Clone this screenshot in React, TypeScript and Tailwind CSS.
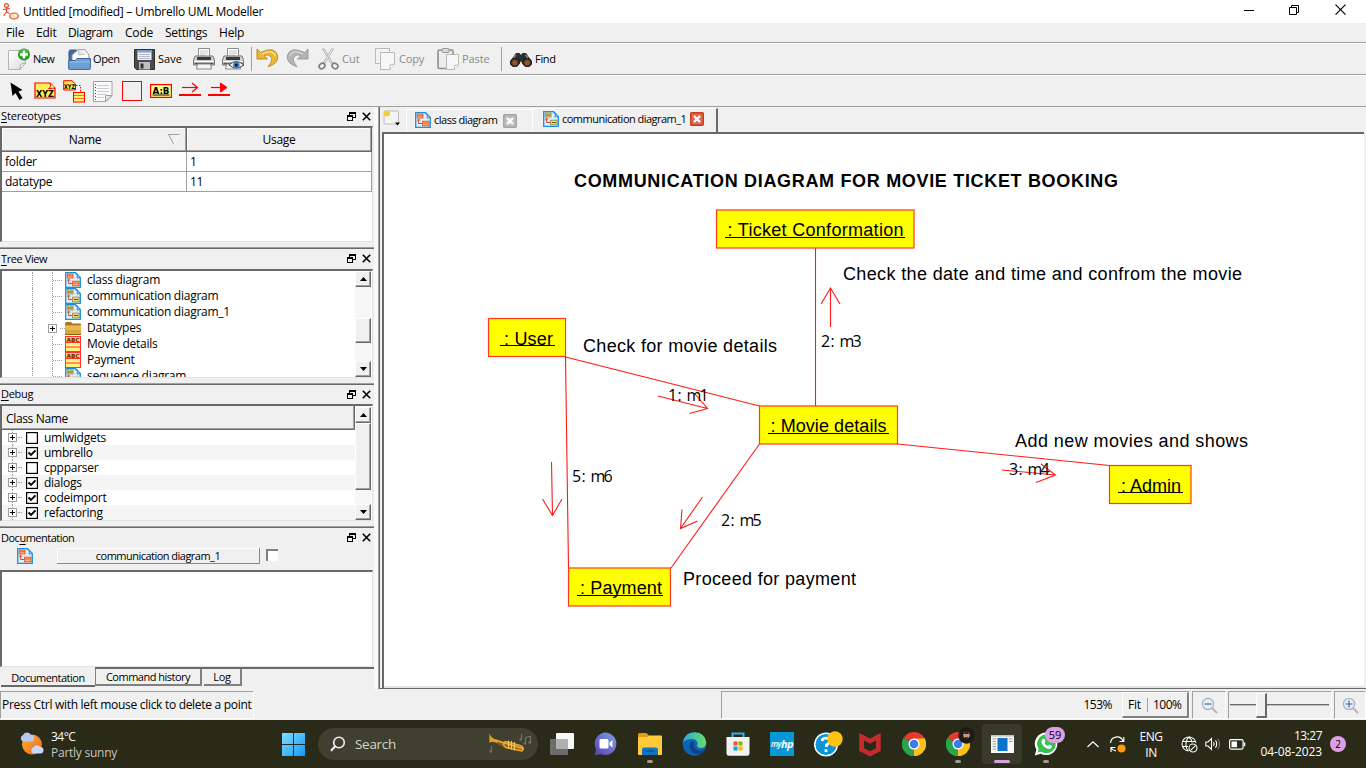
import type { ReactNode } from "react";

const UI = "font-['Open_Sans','Noto_Sans',sans-serif]";

/* ---------- toolbar icons ---------- */

function AppIcon() {
  return (
    <svg width="17" height="17" viewBox="0 0 17 17" fill="none" stroke="#e8442c" strokeWidth="1.2">
      <circle cx="4.500" cy="2.500" r="1.900" />
      <path d="M4.500 4.500V9M1 6.500L8 5.500M4.500 9L1.500 13M4.500 9L7.500 10.500" />
      <ellipse cx="12" cy="13" rx="4.300" ry="3" fill="#ffe9c0" />
    </svg>
  );
}

function NewIcon() {
  return (
    <svg width="23" height="22" viewBox="0 0 23 22">
      <defs>
        <linearGradient id="pg" x1="0" y1="0" x2="1" y2="1">
          <stop offset="0" stopColor="#ffffff" />
          <stop offset="1" stopColor="#dcdcdc" />
        </linearGradient>
      </defs>
      <path d="M.5 2.500H17.500V15L12 21.500H.5Z" fill="url(#pg)" stroke="#b4b4b4" />
      <path d="M12 21.500L12.500 16.500L17.500 15Z" fill="#fff" stroke="#a0a0a0" strokeWidth=".8" />
      <circle cx="16" cy="6.500" r="6" fill="#1f9a1c" />
      <circle cx="16" cy="5.500" r="4.600" fill="#46b83c" />
      <path d="M16 2.500V10.500M12 6.500H20" stroke="#fff" strokeWidth="2.400" />
    </svg>
  );
}

function OpenIcon() {
  return (
    <svg width="23" height="21" viewBox="0 0 23 21">
      <path d="M1 11V2.500Q1 1 2.500 1H8.500L10.500 3V11Z" fill="#3d6ea5" stroke="#2c5689" />
      <path d="M4 12V6L10 .7H17L21 6V12Z" fill="#fafafa" stroke="#8c8c8c" strokeWidth=".9" />
      <path d="M10 .7L11 6L17 5" fill="#e4e4e4" stroke="#aaa" strokeWidth=".7" />
      <path d="M.6 19.500V11.500H7L9 9.500H22.400V19.500Q22.400 20.400 21.500 20.400H1.500Q.6 20.400 .6 19.500Z" fill="#6f9fd4" stroke="#3867a0" />
      <path d="M1.500 13H22" stroke="#9cc0e6" />
    </svg>
  );
}

function SaveIcon() {
  return (
    <svg width="21" height="21" viewBox="0 0 21 21">
      <path d="M.5 .5H20.500V20.500H2.500L.5 18.500Z" fill="#4b4b4f" stroke="#2d2d30" />
      <rect x="3.500" y="1" width="14" height="10" fill="#eef3fa" />
      <rect x="3.500" y="1" width="14" height="2.500" fill="#7aa2d8" />
      <path d="M5 5.500H16M5 7.500H16M5 9.500H16" stroke="#b5bcc8" />
      <rect x="5" y="13" width="11" height="7.500" fill="#bfc0c4" />
      <rect x="6.500" y="14.500" width="3" height="5" fill="#333" />
    </svg>
  );
}

function PrintIcon({ eye = false }: { eye?: boolean }) {
  return (
    <svg width="22" height="22" viewBox="0 0 22 22">
      <path d="M5.500 .5H16.500V9H5.500Z" fill="#fff" stroke="#8b8b8b" />
      <path d="M7 3H15M7 5H15M7 7H13" stroke="#c5c5c5" />
      <path d="M2 8H20L21.500 12V17H.5V12Z" fill="#cfcfcf" stroke="#777" />
      <path d="M4 9H18V12H4Z" fill="#3a3a3a" />
      <path d="M1 13.500H21" stroke="#fff" />
      <path d="M1.500 15.500H20.500" stroke="#555" strokeWidth="1.500" />
      <path d="M4.500 16H17.500L18.500 21H3.500Z" fill="#f4f4f4" stroke="#888" />
      {eye && (
        <g>
          <path d="M7 17Q14 10 22 17Q14 23 7 17Z" fill="#e9f1fa" stroke="#444" />
          <circle cx="14.300" cy="17" r="3.300" fill="#3f7fc4" />
          <circle cx="14.300" cy="17" r="1.500" fill="#101a30" />
        </g>
      )}
    </svg>
  );
}

function UndoIcon({ gray = false }: { gray?: boolean }) {
  return (
    <svg width="23" height="20" viewBox="0 0 23 20" className={gray ? "-scale-x-100" : ""}>
      <path
        d="M1 1V11H11.500L8 7.800Q12 5.500 14.800 8.500Q17.500 12 12 18.800Q22.500 15.500 21.800 8Q19 -2.500 4.500 4.500Z"
        fill={gray ? "#b4b4b4" : "#e9b83a"}
        stroke={gray ? "#979797" : "#bb8415"}
        strokeWidth=".9"
      />
      <path d="M6 6Q16 .5 19.500 8" fill="none" stroke={gray ? "#d0d0d0" : "#f8df79"} strokeWidth="1.500" />
    </svg>
  );
}

function CutIcon() {
  return (
    <svg width="21" height="22" viewBox="0 0 21 22" fill="none">
      <path d="M4.500 .8L13 15.500L14.500 14.500L6.500 1Z" fill="#ececec" stroke="#a6a6a6" strokeWidth=".8" />
      <path d="M15.500 .8L7 15.500L5.500 14.500L13.500 1Z" fill="#f4f4f4" stroke="#a6a6a6" strokeWidth=".8" />
      <ellipse cx="4" cy="18" rx="3.100" ry="2.500" transform="rotate(-35 4 18)" stroke="#7d7d7d" strokeWidth="1.600" />
      <ellipse cx="17" cy="18" rx="3.100" ry="2.500" transform="rotate(35 17 18)" stroke="#7d7d7d" strokeWidth="1.600" />
    </svg>
  );
}

function CopyIcon() {
  return (
    <svg width="21" height="22" viewBox="0 0 21 22" stroke="#b9b9b9">
      <path d="M.5 .5H14.500V15.500H.5Z" fill="#f3f3f3" />
      <path d="M5.500 4.500H19.500V16L15 21.500H5.500Z" fill="#f7f7f7" />
      <path d="M15 21.500V17L19.500 16" fill="#fff" />
    </svg>
  );
}

function PasteIcon() {
  return (
    <svg width="22" height="22" viewBox="0 0 22 22">
      <rect x="1" y="2" width="15" height="18.500" rx="1.500" fill="#ededed" stroke="#8f8f8f" strokeWidth="1.600" />
      <rect x="5" y=".5" width="7" height="4" rx="1" fill="#d8d8d8" stroke="#999" />
      <path d="M9.500 6.500H21.500V17L17.500 21.500H9.500Z" fill="#f7f7f7" stroke="#b9b9b9" />
      <path d="M17.500 21.500V17.500L21.500 17" fill="#fff" stroke="#b9b9b9" />
    </svg>
  );
}

function FindIcon() {
  return (
    <svg width="22" height="15" viewBox="0 0 22 15">
      <path d="M6 1H9.500L11 3L12.500 1H16L21.500 9V13L17 14.500L12.500 12L11 9L9.500 12L5 14.500L.5 13V9Z" fill="#2e2e2e" />
      <circle cx="4.800" cy="10.500" r="4.300" fill="#3b3b3b" stroke="#111" />
      <circle cx="17.200" cy="10.500" r="4.300" fill="#3b3b3b" stroke="#111" />
      <circle cx="4.800" cy="10.700" r="2.500" fill="#a5501c" />
      <circle cx="17.200" cy="10.700" r="2.500" fill="#a5501c" />
      <path d="M6 3L4 6M15.500 3L18 6" stroke="#8f8f8f" strokeWidth="1.200" />
    </svg>
  );
}

/* ---------- work toolbar ---------- */

const CursorIcon = () => (
  <svg width="14" height="19" viewBox="0 0 14 19">
    <path d="M.5 .5L12.500 8L8.500 9.500L12.500 16L9.500 18L5.500 11L2.500 14Z" fill="#000" />
  </svg>
);

const XyzIcon = () => (
  <svg width="22" height="17" viewBox="0 0 22 17">
    <path d="M1 1H16L21 6V16H1Z" fill="#ffee55" stroke="#f00" strokeWidth="1.200" />
    <path d="M16 1Q18 5 14.500 6.500L21 6" fill="#ffffb0" stroke="#f00" />
    <text x="2" y="14.500" fontSize="9.500" fontWeight="bold" fontFamily="DejaVu Sans" textLength="18" lengthAdjust="spacingAndGlyphs">XYZ</text>
  </svg>
);

const XyzLinkIcon = () => (
  <svg width="23" height="23" viewBox="0 0 23 23">
    <path d="M.7 .7H9L12.500 4V10H.7Z" fill="#ffe94a" stroke="#f00" />
    <text x="1" y="8.800" fontSize="6.500" fontWeight="bold" fontFamily="DejaVu Sans" textLength="11" lengthAdjust="spacingAndGlyphs">XYZ</text>
    <path d="M13 5.500H17.500V12" fill="none" stroke="#f00" strokeDasharray="1.500 1.500" />
    <rect x="10.500" y="12.500" width="11" height="9.500" fill="#fff176" stroke="#f00" />
    <path d="M11 15.500H21M11 18.500H21" stroke="#f77700" />
  </svg>
);

const NoteIcon = () => (
  <svg width="20" height="21" viewBox="0 0 20 21">
    <path d="M.5 .5H19V14.500L13 20.500H.5Z" fill="#fafafa" stroke="#a0a0a0" />
    <path d="M4 4.500H16M4 7.500H16M4 10.500H16M4 13.500H13M4 16.500H11" stroke="#c3ccd4" />
    <path d="M2.500 3V19" stroke="#444" strokeDasharray="1 2" />
    <path d="M12.500 20.500V14.500H19Z" fill="#e9e9e9" stroke="#a0a0a0" />
  </svg>
);

const AbIcon = () => (
  <svg width="22" height="14" viewBox="0 0 22 14">
    <rect x=".6" y=".6" width="20.800" height="12.800" fill="#ffff8a" stroke="#f00" strokeWidth="1.200" />
    <text x="2.500" y="9.500" fontSize="8.500" fontWeight="bold" fontFamily="DejaVu Sans" textLength="17" lengthAdjust="spacingAndGlyphs">A:B</text>
    <path d="M2.500 11H19.500" stroke="#000" />
  </svg>
);

const MsgIcon = ({ solid = false }: { solid?: boolean }) => (
  <svg width="22" height="14" viewBox="0 0 22 14" stroke="#f00" fill="none">
    <path d="M0 13H22" strokeWidth="2" />
    <path d="M3 5.500H18" strokeWidth="1.200" />
    {solid ? <path d="M12.500 1L19 5.500L12.500 10Z" fill="#f00" /> : <path d="M13 1L18.500 5.500L13 10" strokeWidth="1.200" />}
  </svg>
);

/* ---------- small tree / dock icons ---------- */

function DiagramIcon({ kind = "comm" }: { kind?: "class" | "comm" }) {
  const box = kind === "class" ? "#ffb27a" : "#f0e27c";
  const line = kind === "class" ? "#e8532b" : "#9a8a3e";
  return (
    <svg width="16" height="16" viewBox="0 0 16 16" className="shrink-0">
      <path d="M.7 .7H10.500L15.300 5.500V15.300H.7Z" fill="#d9effc" stroke="#1b8fe0" strokeWidth="1.300" />
      <path d="M10 .7Q13.500 1.500 12 6L15.300 5.500Z" fill="#fff" stroke="#1b8fe0" />
      <rect x="2.200" y="2" width="5.800" height="4" fill={box} stroke={line} strokeWidth=".9" />
      <rect x="7.600" y="9.200" width="6.400" height="4.600" fill={box} stroke={line} strokeWidth=".9" />
      <path d={kind === "class" ? "M8 11H14M2.500 3.700H8" : "M3 4H7.500M8.800 11.500H13"} stroke={kind === "class" ? "#e8532b" : "#4b4320"} strokeWidth=".9" />
      <path d="M3.600 7V11.500H7.200M2.300 8.700L3.600 7L5 8.700" fill="none" stroke="#e8442c" />
    </svg>
  );
}

const FolderIcon = () => (
  <svg width="16" height="14" viewBox="0 0 16 14" className="shrink-0">
    <path d="M0 2.500Q0 1 1.500 1H6L7.500 2.500H15Q16 2.500 16 3.500V13H0Z" fill="#a9761b" />
    <path d="M0 4.500H16V13H0Z" fill="#dca53a" />
    <path d="M0 4.500H16V8.500Q8 9.500 0 8.500Z" fill="#e8b855" />
    <path d="M0 13.500H16" stroke="#8d6010" />
  </svg>
);

const ClassIcon = () => (
  <svg width="16" height="16" viewBox="0 0 16 16" className="shrink-0">
    <rect x=".5" y=".5" width="15" height="15" fill="#fff27d" stroke="#f33" />
    <rect x="1" y="1" width="14" height="4.500" fill="#ffc766" />
    <text x="1.500" y="5.600" fontSize="5.500" fontWeight="bold" fontFamily="DejaVu Sans" fill="#6b2200" textLength="13" lengthAdjust="spacingAndGlyphs">ABC</text>
    <path d="M0 6.500H16M0 11H16" stroke="#f33" strokeWidth="1.200" />
  </svg>
);

const Plus = () => (
  <svg width="9" height="9" viewBox="0 0 9 9" className="shrink-0" shapeRendering="crispEdges">
    <rect x=".5" y=".5" width="8" height="8" fill="#fff" stroke="#a0a0a0" />
    <path d="M2 4.500H7M4.500 2V7" stroke="#000" />
  </svg>
);

const DockButtons = () => (
  <span className="flex gap-[6px]">
    <svg width="9" height="9" viewBox="0 0 9 9" fill="none" stroke="#000" shapeRendering="crispEdges">
      <path d="M2.500 3V.5H8.500V5.500H6M2 1.500H9M.5 3.500H5.500V8.500H.5ZM0 4.500H6" />
    </svg>
    <svg width="9" height="9" viewBox="0 0 9 9" stroke="#000" strokeWidth="1.600">
      <path d="M.8 .8L8.200 8.200M8.200 .8L.8 8.200" />
    </svg>
  </span>
);

/* ---------- panels ---------- */

function DockTitle({ first, rest, lead = "", className }: { first: string; rest: string; lead?: string; className: string }) {
  return (
    <div className={`flex items-center justify-between pr-[3px] pb-px pl-px text-[11px] leading-[18px] ${className}`}>
      <span>
        {lead}
        <u className="underline-offset-2">{first}</u>
        {rest}
      </span>
      <DockButtons />
    </div>
  );
}

const ScrollButton = ({ down = false }: { down?: boolean }) => (
  <div className="flex h-4 w-4 shrink-0 items-center justify-center border border-t-white border-l-white border-r-[#696969] border-b-[#696969] bg-[#f0f0f0] shadow-[inset_-1px_-1px_0_#a0a0a0]">
    <svg width="7" height="4" viewBox="0 0 7 4" className={down ? "rotate-180" : ""}>
      <path d="M0 4L3.500 0L7 4Z" />
    </svg>
  </div>
);

const Thumb = ({ className }: { className: string }) => (
  <div className={`w-4 shrink-0 border border-t-white border-l-white border-r-[#696969] border-b-[#696969] bg-[#f0f0f0] shadow-[inset_-1px_-1px_0_#a0a0a0] ${className}`} />
);

const Divider = () => <div className="h-0.5 w-[374px] border-t border-[#a0a0a0] bg-[#696969]" />;

const inset = "border-t-2 border-l-2 border-r border-b border-t-[#696969] border-l-[#696969] border-r-[#e3e3e3] border-b-[#e3e3e3] bg-white";

const headCell = "flex h-6 items-center border-r border-b border-[#696969] bg-[#f0f0f0] pt-px tracking-[-0.25px] shadow-[inset_-1px_-1px_0_#a0a0a0,inset_1px_1px_0_#fff]";

function Stereotypes() {
  return (
    <section>
      <DockTitle first="S" rest="tereotypes" className="h-[19px] tracking-[-0.1px]" />
      <div className={`${inset} mb-[5px] h-[116px] w-[373px]`}>
        <div className="grid w-[370px] grid-cols-[185px_185px] text-[12px]">
          <div className={`relative justify-center pr-[18px] ${headCell}`}>
            Name
            <svg width="12" height="11" viewBox="0 0 12 11" className="absolute top-[6px] right-[6px]" fill="none">
              <path d="M0 .5H12M.5 .5L6 10.500" stroke="#a0a0a0" />
              <path d="M11.500 .5L6 10.500" stroke="#fff" />
            </svg>
          </div>
          <div className={`justify-center ${headCell}`}>Usage</div>
          {["folder", "1", "datatype", "11"].map((t, i) => (
            <div key={i} className="flex h-5 items-center border-r border-b border-[#a0a0a0] pl-[3px] tracking-[-0.25px]">
              {t}
            </div>
          ))}
        </div>
      </div>
      <Divider />
    </section>
  );
}

const TREE: { label: string; icon: ReactNode; plus?: boolean }[] = [
  { label: "class diagram", icon: <DiagramIcon kind="class" /> },
  { label: "communication diagram", icon: <DiagramIcon /> },
  { label: "communication diagram_1", icon: <DiagramIcon /> },
  { label: "Datatypes", icon: <FolderIcon />, plus: true },
  { label: "Movie details", icon: <ClassIcon /> },
  { label: "Payment", icon: <ClassIcon /> },
  { label: "sequence diagram", icon: <DiagramIcon /> },
];

function TreeView() {
  return (
    <section>
      <DockTitle first="T" rest="ree View" className="h-5 tracking-[-0.4px]" />
      <div className={`${inset} mb-[5px] flex h-[109px] w-[373px] overflow-hidden`}>
        <div className="w-[353px] overflow-hidden pt-px">
          {TREE.map((n) => (
            <div key={n.label} className="flex h-4 items-center">
              <div className="ml-[30px] h-4 w-[16px] border-l border-dotted border-[#a0a0a0]" />
              {n.plus ? (
                <div className="flex w-[17px] items-center">
                  <Plus />
                  <span className="ml-[3px] w-[5px] border-t border-dotted border-[#a0a0a0]" />
                </div>
              ) : (
                <div className="ml-[4px] flex h-4 w-[13px] items-center border-l border-dotted border-[#a0a0a0]">
                  <span className="w-[9px] border-t border-dotted border-[#a0a0a0]" />
                </div>
              )}
              {n.icon}
              <span className="ml-[6px] text-[12px] leading-4 tracking-[-0.25px] whitespace-nowrap">{n.label}</span>
            </div>
          ))}
        </div>
        <div className="flex w-4 flex-col bg-[#f7f7f7]">
          <ScrollButton />
          <Thumb className="mt-[31px] h-[25px]" />
          <div className="flex-1" />
          <ScrollButton down />
        </div>
      </div>
      <Divider />
    </section>
  );
}

const DEBUG: [string, boolean][] = [
  ["umlwidgets", false],
  ["umbrello", true],
  ["cppparser", false],
  ["dialogs", true],
  ["codeimport", true],
  ["refactoring", true],
];

function Debug() {
  return (
    <section>
      <DockTitle first="D" rest="ebug" className="h-[19px] tracking-[-0.3px]" />
      <div className={`${inset} mb-[5px] flex h-[117px] w-[373px]`}>
        <div className="w-[353px]">
          <div className="flex h-[24px] items-center border-r border-b border-[#696969] bg-[#f0f0f0] pt-0.5 pl-1 text-[12px] tracking-[-0.35px] shadow-[inset_-1px_-1px_0_#a0a0a0]">Class Name</div>
          <div>
            {DEBUG.map(([name, on]) => (
              <div key={name} className="flex h-[15px] items-center pl-[6px] odd:bg-white even:bg-[#f5f5f5]">
                <div className="flex h-[15px] flex-col items-center">
                  <span className="h-[3px] border-l border-dotted border-[#a0a0a0]" />
                  <Plus />
                  <span className="h-[3px] border-l border-dotted border-[#a0a0a0]" />
                </div>
                <span className="ml-px w-1 border-t border-dotted border-[#a0a0a0]" />
                <svg width="12" height="12" viewBox="0 0 12 12" className="ml-[4px]">
                  <rect x=".6" y=".6" width="10.800" height="10.800" fill="#fff" stroke="#000" strokeWidth="1.200" />
                  {on && <path d="M2.500 5.500L5 8L9.500 3.300" fill="none" stroke="#000" strokeWidth="1.900" />}
                </svg>
                <span className="ml-[6px] text-[12px] leading-[15px] tracking-[-0.25px]">{name}</span>
              </div>
            ))}
          </div>
        </div>
        <div className="flex w-4 flex-col bg-[#f7f7f7] pt-px">
          <ScrollButton />
          <Thumb className="h-[67px]" />
          <div className="flex-1" />
          <ScrollButton down />
        </div>
      </div>
      <Divider />
    </section>
  );
}

function Documentation() {
  return (
    <section className="flex flex-col">
      <DockTitle lead="Doc" first="u" rest="mentation" className="h-5 tracking-[-0.5px]" />
      <div className="flex h-[22px] items-start pl-[17px]">
        <DiagramIcon kind="class" />
        <div className="ml-6 h-4 w-[203px] border-r border-b border-[#8a8a8a] text-center text-[11px] leading-[15px] tracking-[-0.52px] shadow-[inset_1px_1px_0_#fff]">communication diagram_1</div>
        <div className="mt-px ml-[6px] h-3 w-3 border-t-2 border-l-2 border-t-[#808080] border-l-[#808080] bg-white" />
      </div>
      <div className={`${inset} h-[97px] w-[373px]`} />
      <div className="flex h-[21px] items-start text-[11px]">
        <div className="ml-px h-5 w-[94px] border-b-2 border-[#696969] text-center leading-[22px] tracking-[-0.5px]">Documentation</div>
        <div className="flex h-[19px] flex-1 border-t-2 border-[#696969]">
          <div className="h-[17px] w-[107px] border-r-2 border-b-2 border-l border-[#808080] text-center leading-4 tracking-[-0.5px]">Command history</div>
          <div className="ml-0.5 h-[17px] w-[38px] border-r-2 border-b-2 border-[#808080] text-center leading-4 tracking-[-0.3px]">Log</div>
        </div>
      </div>
    </section>
  );
}

/* ---------- diagram ---------- */

const NODES = [
  { x: 716.5, y: 210, w: 197.5, h: 38, label: ": Ticket Conformation", u0: 725, tx: 728.5, tw: 176, u1: 905 },
  { x: 488.5, y: 318.5, w: 77, h: 38, label: ": User", u0: 500, tx: 505, tw: 49, u1: 555 },
  { x: 759.5, y: 406, w: 138, h: 38, label: ": Movie details", u0: 768, tx: 771.5, tw: 116, u1: 889 },
  { x: 1109.5, y: 465.5, w: 81.5, h: 38, label: ": Admin", u0: 1118, tx: 1122, tw: 60, u1: 1183 },
  { x: 568.5, y: 568, w: 102, h: 38, label: ": Payment", u0: 577, tx: 581, tw: 82, u1: 663 },
];

const NOTES = [
  { x: 843, y: 280, w: 399, t: "Check the date and time and confrom the movie" },
  { x: 583, y: 352, w: 194, t: "Check for movie details" },
  { x: 1015, y: 447, w: 233, t: "Add new movies and shows" },
  { x: 683, y: 585, w: 173, t: "Proceed for payment" },
];

const MESSAGES = [
  { x: 821, y: 347, t: "2: m3" },
  { x: 668, y: 401, t: "1: m1" },
  { x: 572, y: 482, t: "5: m6" },
  { x: 721, y: 526, t: "2: m5" },
  { x: 1009, y: 475, t: "3: m4" },
];

/* horizontal start of each glyph in a message label */
const GLYPH_STEPS = [0, 9.5, 14, 18.5, 31.5];

function Diagram() {
  return (
    <svg width="980" height="552" viewBox="384 134 980 552" className="block bg-white">
      <g stroke="#ff1a1a" strokeWidth="1.100" fill="none">
        <path d="M815.500 248V406M565.500 357L759.500 406M565.500 357L568.500 568M759.500 444L671 568M897.500 444L1109.500 465.500" />
        <path d="M830.500 327V288M821 304L830.500 288L840 304" />
        <path d="M658 396L707.500 408.500M695 394L707.500 408.500L689.500 413.500" />
        <path d="M551.500 462L552.500 515.500M542.500 499L552.500 515.500L562 499" />
        <path d="M702.500 497L680.500 528.500M682 509.500L680.500 528.500L697.500 521" />
        <path d="M1002 470L1055.500 475M1041 464L1055.500 475L1036 482.500" />
      </g>
      <g fontFamily="'Liberation Sans', Arial, sans-serif" fontSize="18">
        <text x="574" y="187" fontWeight="bold" textLength="544">COMMUNICATION DIAGRAM FOR MOVIE TICKET BOOKING</text>
        {NODES.map((n) => (
          <g key={n.label}>
            <rect x={n.x} y={n.y} width={n.w} height={n.h} fill="#ffff00" stroke="#ff3a1a" strokeWidth="1.200" />
            <text x={n.tx - 1} y={n.y + 26} textLength={n.tw}>{n.label}</text>
            <path d={`M${n.u0} ${Math.floor(n.y) + 27.5}H${n.u1}`} stroke="#000" strokeWidth="1.200" />
          </g>
        ))}
        {NOTES.map((n) => (
          <text key={n.t} x={n.x} y={n.y} textLength={n.w}>{n.t}</text>
        ))}
      </g>
      <g fontFamily="'Open Sans', 'Noto Sans', sans-serif" fontSize="16">
        {MESSAGES.map((m) => (
          <text key={m.t} x={GLYPH_STEPS.map((s) => m.x + s).join(" ")} y={m.y}>{m.t}</text>
        ))}
      </g>
    </svg>
  );
}

const TabClose = ({ active = false }: { active?: boolean }) => (
  <svg width="14" height="14" viewBox="0 0 14 14">
    <rect x=".7" y=".7" width="12.600" height="12.600" rx="1" fill={active ? "#e2694c" : "#bdbdbd"} stroke={active ? "#c93a1c" : "#a3a3a3"} strokeWidth="1.400" />
    <path d="M4 4L10 10M10 4L4 10" stroke="#fff" strokeWidth="2.300" />
  </svg>
);

function Workspace() {
  return (
    <main className="flex w-[986px] flex-col">
      <div className="flex h-[25px] items-end">
        <svg width="18" height="16" viewBox="0 0 18 16" className="mb-[6px] ml-[3px]">
          <rect x="1" y="1" width="14.500" height="13" rx="1.500" fill="#f4f4f4" stroke="#bcbcbc" />
          <circle cx="4" cy="3.500" r="3" fill="#f7cf2e" />
          <path d="M12 12.500H17L14.500 15.500Z" />
        </svg>
        <div className="ml-[5px] flex h-[23px] w-[126px] items-center border-t border-l border-white pb-[3px] pl-[8px] text-[11px]">
          <DiagramIcon kind="class" />
          <span className="ml-[3px] w-[65px] pt-px tracking-[-0.5px] whitespace-nowrap">class diagram</span>
          <span className="ml-1 pt-0.5"><TabClose /></span>
        </div>
        <div className="flex h-[24px] w-[186px] items-center border-t border-r-2 border-l border-t-white border-r-[#696969] border-l-white pb-[3px] text-[11px]">
          <span className="ml-[10px]"><DiagramIcon /></span>
          <span className="ml-[3px] w-[124px] tracking-[-0.52px] whitespace-nowrap">communication diagram_1</span>
          <span className="ml-1"><TabClose active /></span>
        </div>
      </div>
      <div className="ml-[2px] h-[556px] w-[982px] border-t-2 border-l-2 border-t-[#696969] border-l-[#696969]">
        <div className="h-[554px] w-[980px] border-r border-b-2 border-[#e3e3e3]">
          <Diagram />
        </div>
      </div>
      <div className="h-px bg-[#696969]" />
    </main>
  );
}

/* ---------- status bar ---------- */

const sunk = "border border-t-[#a0a0a0] border-l-[#a0a0a0] border-r-white border-b-white";

const Magnifier = ({ plus = false }: { plus?: boolean }) => (
  <svg width="17" height="17" viewBox="0 0 17 17">
    <path d="M11 11L16 16" stroke="#b5b5b5" strokeWidth="2" />
    <circle cx="7" cy="7" r="5.600" fill="#e6eff8" stroke="#a3b0c2" strokeWidth="1.200" />
    <path d={plus ? "M3.500 7H10.500M7 3.500V10.500" : "M3.500 7H10.500"} stroke="#4a6793" strokeWidth="1.200" />
  </svg>
);

function StatusBar() {
  return (
    <div className="flex h-[30px] items-start bg-[#f0f0f0] pt-px text-[12px]">
      <div className={`${sunk} h-7 w-[254px] pl-px leading-[26px] tracking-[-0.3px] whitespace-nowrap`}>Press Ctrl with left mouse click to delete a point</div>
      <div className={`${sunk} ml-[467px] flex h-7 w-[469px] items-center justify-end`}>
        <span className="mr-[10px] tracking-[-0.5px]">153%</span>
        <div className="flex h-[26px] w-[67px] items-center border-t border-r-2 border-b-2 border-l border-t-white border-r-[#808080] border-b-[#808080] border-l-white pl-[5px]">
          <span className="tracking-[-0.2px]">Fit</span>
          <span className="ml-[6px] h-[14px] w-px bg-[#a0a0a0]" />
          <span className="ml-[5px] tracking-[-0.5px]">100%</span>
        </div>
      </div>
      <div className={`${sunk} ml-[2px] flex h-7 w-[34px] items-center justify-center`}><Magnifier /></div>
      <div className={`${sunk} ml-[2px] flex h-7 w-[104px] items-center`}>
        <div className="ml-px h-0.5 w-[26px] border-t border-[#696969] bg-[#c0c0c0]" />
        <div className="h-[25px] w-[11px] border-t border-r-2 border-b-2 border-l border-t-white border-r-[#696969] border-b-[#696969] border-l-white bg-[#f0f0f0]" />
        <div className="h-0.5 w-[62px] border-t border-[#696969] bg-[#c0c0c0]" />
      </div>
      <div className={`${sunk} ml-[2px] flex h-7 flex-1 items-center justify-center`}><Magnifier plus /></div>
    </div>
  );
}

/* ---------- taskbar ---------- */

const Cell = ({ children, dot = false, active = false }: { children: ReactNode; dot?: boolean; active?: boolean }) => (
  <div className="relative flex h-12 w-11 shrink-0 items-center justify-center">
    {active && <span className="absolute top-1 left-[2px] h-10 w-10 rounded bg-[#393a2b]" />}
    <span className="relative">{children}</span>
    {dot && <span className="absolute bottom-[5px] left-[19px] h-[3px] w-[6px] rounded-full bg-[#9b9b90]" />}
    {active && <span className="absolute bottom-[5px] left-[14px] h-[3px] w-4 rounded-full bg-[#d9a0e2]" />}
  </div>
);

const Chrome = () => (
  <svg width="24" height="24" viewBox="0 0 24 24" className="block">
    <path d="M12 12L1.600 6A12 12 0 0 1 22.400 6Z" fill="#e33b2e" />
    <path d="M12 12L22.400 6A12 12 0 0 1 12 24Z" fill="#fbc116" />
    <path d="M12 12V24A12 12 0 0 1 1.600 6Z" fill="#2ba24c" />
    <path d="M12 6.500H22.600A12 12 0 0 1 12 24L16.800 14.800Z" fill="#fbc116" />
    <path d="M1.600 6L7.200 14.800L12 17.500V24A12 12 0 0 1 1.600 6Z" fill="#2ba24c" />
    <circle cx="12" cy="12" r="5.500" fill="#fff" />
    <circle cx="12" cy="12" r="4.300" fill="#3a7cf0" />
  </svg>
);

function Taskbar() {
  return (
    <footer className="flex h-12 items-center bg-[#292a18] text-[12px] text-white">
      <svg width="26" height="24" viewBox="0 0 26 24" className="ml-[19px]">
        <defs>
          <linearGradient id="sun" x1="0" y1="0" x2="1" y2="1">
            <stop offset="0" stopColor="#f7b731" />
            <stop offset="1" stopColor="#f0641e" />
          </linearGradient>
        </defs>
        <circle cx="13" cy="12.500" r="10" fill="url(#sun)" />
        <path d="M4 9.500A3.500 3.500 0 0 1 4 3A4.500 4.500 0 0 1 12 3A3 3 0 0 1 12 9.500Z" fill="#b9c8ee" />
        <path d="M14 21.500A3.500 3.500 0 0 1 14 15.500A4.500 4.500 0 0 1 21.500 15A3.300 3.300 0 0 1 22 21.500Z" fill="#c9d8f8" />
      </svg>
      <div className="ml-[6px] w-[80px] pt-px leading-4">
        <div className="tracking-[-0.5px]">34°C</div>
        <div className="tracking-[-0.25px] whitespace-nowrap text-[#c6c6bd]">Partly sunny</div>
      </div>
      <div className="ml-[140px] w-11">
        <svg width="23" height="23" viewBox="0 0 23 23" className="ml-[11px]">
          <defs>
            <linearGradient id="win" x1="0" y1="0" x2="1" y2="1">
              <stop offset="0" stopColor="#7fe0ff" />
              <stop offset="1" stopColor="#1298f5" />
            </linearGradient>
          </defs>
          <path d="M0 0H11V11H0ZM12 0H23V11H12ZM0 12H11V23H0ZM12 12H23V23H12Z" fill="url(#win)" />
        </svg>
      </div>
      <div className="ml-[3px] flex h-8 w-[220px] items-center rounded-full bg-[#3f402f]">
        <svg width="16" height="16" viewBox="0 0 16 16" className="ml-3" fill="none" stroke="#f2f2f2" strokeWidth="1.600">
          <circle cx="9" cy="6.500" r="5.300" />
          <path d="M5.200 10.300L1 14.800" strokeWidth="2" />
        </svg>
        <span className="ml-[9px] w-[60px] text-[13.500px] tracking-[-0.3px] text-[#d5d5ce]">Search</span>
        <svg width="46" height="22" viewBox="0 0 46 22" className="ml-[73px]" fill="none">
          <path d="M1.500 .5Q3 5.500 10 6.500L17 9L34 13.500Q37 15.500 34.500 18.500L16 14.500L9 10.500Q5 8 1.500 9.500Z" fill="#8f5d14" />
          <path d="M1.500 .5Q3 5.500 9 7L9 10Q5 7.800 1.500 9.500Z" fill="#e3a12c" />
          <path d="M8 7.500L36 16M17 8.500L32 12.500Q37 14.500 34 18L18 14.500Q14 12 17 8.500" stroke="#e9ab33" strokeWidth="1.500" />
          <path d="M20.500 7.500V15.500M23.500 8V16.500M26.500 9V17.500" stroke="#f2c763" strokeWidth="1.200" />
          <path d="M33.500 1V6M37.500 4.500V10M37.500 4.500L42.500 3.500V9M3.500 13V18" stroke="#73746c" strokeWidth="1.200" />
          <path d="M31.500 6.500H34M35.500 10.500H38M40.500 9.500H43M1.500 18.500H4" stroke="#73746c" strokeWidth="1.800" />
        </svg>
      </div>
      <div className="ml-[2px] flex">
        <Cell>
          <svg width="24" height="22" viewBox="0 0 24 22">
            <rect x="6" y="0" width="18" height="16" rx="1" fill="#f7f7f7" />
            <rect x="0" y="6" width="18" height="16" rx="1" fill="#6c6c6a" />
            <rect x="6" y="6" width="12" height="10" fill="#b0b0ad" />
          </svg>
        </Cell>
        <Cell>
          <svg width="24" height="24" viewBox="0 0 24 24">
            <defs>
              <linearGradient id="chat" x1="1" y1="0" x2="0" y2="1">
                <stop offset="0" stopColor="#7fa1e0" />
                <stop offset="1" stopColor="#5a40b8" />
              </linearGradient>
            </defs>
            <path d="M12 .5A11.300 11.300 0 1 1 7 22.300L.8 23L2 17A11.300 11.300 0 0 1 12 .5Z" fill="url(#chat)" />
            <rect x="5.500" y="7" width="9" height="9.500" rx="1.500" fill="#fff" />
            <path d="M15.500 10.500L18.500 8V15.500L15.500 13Z" fill="#fff" />
          </svg>
        </Cell>
        <Cell dot>
          <svg width="24" height="22" viewBox="0 0 24 22">
            <path d="M0 1.500Q0 0 1.500 0H8.500L11 2.500V6H0Z" fill="#e29a0c" />
            <path d="M0 4H9L11 2.500H23Q24 2.500 24 3.500V21Q24 22 23 22H1Q0 22 0 21Z" fill="#ffcb3d" />
            <path d="M4 22V16.500Q4 14.500 6 14.500H18Q20 14.500 20 16.500V22Z" fill="#1173c4" />
            <path d="M8 18H16" stroke="#0a4f92" strokeWidth="1.500" />
          </svg>
        </Cell>
        <Cell>
          <svg width="25" height="24" viewBox="0 0 25 24">
            <defs>
              <linearGradient id="ed1" x1="0" y1="0" x2="1" y2="0">
                <stop offset="0" stopColor="#2aa9e6" />
                <stop offset="1" stopColor="#67dd63" />
              </linearGradient>
            </defs>
            <circle cx="12.500" cy="12" r="11.800" fill="#0d62b4" />
            <path d="M.8 10.500Q3 .2 12.500 .2Q23 .5 24.300 10.500Q24 16 18 16Q14 15.500 15.500 12Q15.500 7 9.500 7Q3.500 7 .8 10.500Z" fill="url(#ed1)" />
            <path d="M9.500 9.500Q5.500 15 10 20Q13 23 18 21.500Q22 20 23 17.500Q17 20.500 13 16.500Q10.500 13.500 12 10Z" fill="#123f86" />
          </svg>
        </Cell>
        <Cell>
          <svg width="24" height="24" viewBox="0 0 24 24">
            <path d="M6.500 5V1.500H17.500V5" fill="none" stroke="#35aeea" strokeWidth="2" />
            <path d="M.5 5H23.500V21.500Q23.500 23.700 21 23.700H3Q.5 23.700 .5 21.500Z" fill="#f2f2f2" />
            <path d="M7.500 9.500H11.500V13.500H7.500Z" fill="#f25022" />
            <path d="M12.500 9.500H16.500V13.500H12.500Z" fill="#7fba00" />
            <path d="M7.500 14.500H11.500V18.500H7.500Z" fill="#00a4ef" />
            <path d="M12.500 14.500H16.500V18.500H12.500Z" fill="#ffb900" />
          </svg>
        </Cell>
        <Cell>
          <div className="flex h-6 w-6 items-center justify-center bg-[#0796d6] text-[8px] leading-6 font-semibold tracking-[-0.6px] italic">
            my<span className="text-[11px] font-bold">hp</span>
          </div>
        </Cell>
        <Cell>
          <svg width="29" height="26" viewBox="0 0 29 26" className="ml-1">
            <circle cx="12" cy="13.500" r="11.300" fill="#0a96d6" stroke="#fff" strokeWidth="1.500" />
            <path d="M8 10Q8.500 7 12 7Q16 7.200 15.500 10.500Q15 12.500 12.500 14V16M12 18.200V21" fill="none" stroke="#fff" strokeWidth="2.700" />
            <circle cx="21" cy="8" r="7.700" fill="#ffc20e" />
          </svg>
        </Cell>
        <Cell>
          <svg width="22" height="25" viewBox="0 0 22 25">
            <path d="M.3 1L11 6.500L21.700 1V19L11 24.500L.3 19Z" fill="#c32b2f" />
            <path d="M5 8.500L11 11.700L17 8.500V16.300L11 19.300L5 16.300Z" fill="#292a18" />
          </svg>
        </Cell>
        <Cell><Chrome /></Cell>
        <Cell dot>
          <div className="relative">
            <Chrome />
            <svg width="17" height="17" viewBox="0 0 17 17" className="absolute -top-[5px] left-3">
              <circle cx="8.500" cy="8.500" r="8.300" fill="#1f1a1a" />
              <circle cx="8.500" cy="8" r="3.300" fill="#c59a7c" />
              <path d="M5 7Q8.500 2 12 7" fill="#352420" />
              <path d="M6.500 10Q8.500 13 10.500 10Z" fill="#5b2f28" />
            </svg>
          </div>
        </Cell>
        <Cell active>
          <svg width="23" height="18" viewBox="0 0 23 18">
            <rect width="23" height="18" fill="#f8f8f8" />
            <path d="M0 .8H23" stroke="#bdbdbd" strokeWidth="1.500" />
            <rect x="6.500" y="3" width="10" height="13" fill="#0d73c8" />
            <path d="M1.500 4H5M1.500 6.500H5M1.500 9H5M1.500 11.500H5M1.500 14H5M18 4H21.500M18 6.500H21.500" stroke="#9d9d9d" />
          </svg>
        </Cell>
        <Cell dot>
          <div className="relative">
            <svg width="24" height="24" viewBox="0 0 24 24">
              <path d="M12.500 .5A11.300 11.300 0 1 1 6.800 21.800L.8 23.500L2.400 17.500A11.300 11.300 0 0 1 12.500 .5Z" fill="#fff" />
              <path d="M12.500 2.500A9.300 9.300 0 1 1 7.500 19.700L3.700 20.600L4.700 17A9.300 9.300 0 0 1 12.500 2.500Z" fill="#32c24d" />
              <path d="M8.500 7L10.500 6.800L11.500 9.500L10.400 10.900Q11.500 13 14 14L15.300 12.600L18 14Q17.500 17.300 14.500 17Q8 15 7.300 9.500Z" fill="#fff" />
            </svg>
            <span className="absolute -top-[5px] left-[11px] h-4 w-5 rounded-full bg-[#dda0e6] text-center text-[11px] leading-4 text-black">59</span>
          </div>
        </Cell>
      </div>
      <svg width="12" height="7" viewBox="0 0 12 7" className="ml-[19px]" fill="none" stroke="#fff" strokeWidth="1.200">
        <path d="M.5 6L6 .8L11.500 6" />
      </svg>
      <svg width="17" height="17" viewBox="0 0 17 17" className="ml-[10px]" fill="none" stroke="#fff" strokeWidth="1.200">
        <path d="M1.500 7A6.500 6.500 0 0 1 14 5M14.800 1V5.500H10.500M2 16V11.500H6.500M2 12A6.500 6.500 0 0 0 7 14.800" />
        <circle cx="12.500" cy="12.500" r="4" fill="#ff9a0e" stroke="none" />
      </svg>
      <div className="ml-[10px] w-[30px] pt-px text-center leading-4 tracking-[-0.4px]">
        <div>ENG</div>
        <div>IN</div>
      </div>
      <svg width="17" height="17" viewBox="0 0 17 17" className="ml-[15px]" fill="none" stroke="#fff" strokeWidth="1.100">
        <path d="M15 7A7 7 0 1 0 7.500 15M8 1Q4.500 4 5 10Q5.500 13.500 7.500 15M8 1Q10.500 3 11 6.500M1.500 5.500H14.500M1 10.500H7" />
        <circle cx="12" cy="12" r="4" />
        <path d="M9.300 14.700L14.700 9.300" />
      </svg>
      <svg width="17" height="14" viewBox="0 0 17 14" className="ml-[7px]" fill="none" stroke="#fff" strokeWidth="1.100">
        <path d="M.8 5V9H3L6.500 12.500V1.500L3 5ZM8.500 5Q10 7 8.500 9M10.500 3.300Q13 7 10.500 10.700" />
        <path d="M12.700 1.500Q16.500 7 12.700 12.500" stroke="#7b7b70" />
      </svg>
      <svg width="17" height="11" viewBox="0 0 17 11" className="ml-[7px]">
        <rect x=".6" y=".6" width="13.500" height="9.500" rx="1.500" fill="none" stroke="#fff" strokeWidth="1.200" />
        <rect x="2.500" y="2.500" width="5.500" height="5.700" fill="#fff" />
        <path d="M15.500 3.500V7.200" stroke="#fff" strokeWidth="1.500" />
      </svg>
      <div className="ml-auto text-right leading-4">
        <div className="tracking-[-0.5px]">13:27</div>
        <div className="tracking-[-0.1px]">04-08-2023</div>
      </div>
      <div className="mr-[20px] ml-[8px] h-4 w-4 shrink-0 rounded-full bg-[#dda0e6] text-center text-[10px] leading-4 text-black">2</div>
    </footer>
  );
}

/* ---------- chrome ---------- */

const Tool = ({ icon, label, className, gray = false }: { icon: ReactNode; label: string; className: string; gray?: boolean }) => (
  <div className={`flex items-center ${className} ${gray ? "text-[#8a8a8a]" : ""}`}>
    {icon}
    <span className="text-[11px]">{label}</span>
  </div>
);

export default function App() {
  return (
    <div className={`flex h-[768px] w-[1366px] flex-col overflow-hidden bg-[#f0f0f0] text-black ${UI}`}>
      <header className="flex h-[23px] items-center bg-white">
        <span className="ml-0.5"><AppIcon /></span>
        <span className="ml-1 text-[12px] tracking-[-0.27px]">Untitled [modified] – Umbrello UML Modeller</span>
        <svg width="104" height="12" viewBox="0 0 104 12" className="mr-[19px] mb-[3px] ml-auto" fill="none" stroke="#000">
          <path d="M1 6.500H11" />
          <path d="M46.500 3.500H53.500V10.500H46.500ZM48.500 3.500V1.500H55.500V8.500H53.500" />
          <path d="M92.500 .7L102.500 10.700M102.500 .7L92.500 10.700" strokeWidth="1.200" />
        </svg>
      </header>
      <nav className="flex h-5 items-center border-b border-[#a0a0a0] pt-px pl-[6px] text-[12px]">
        <span className="w-[30px] tracking-[-0.2px]">File</span>
        <span className="w-[32px] tracking-[-0.2px]">Edit</span>
        <span className="w-[57px] tracking-[-0.4px]">Diagram</span>
        <span className="w-[40px] tracking-[-0.2px]">Code</span>
        <span className="w-[54px] tracking-[-0.3px]">Settings</span>
        <span className="tracking-[-0.2px]">Help</span>
      </nav>
      <div className="flex h-8 items-center border-t border-b border-t-white border-b-[#a0a0a0] pl-2">
        <Tool icon={<NewIcon />} label="New" className="w-[60px] gap-[2px] tracking-[-0.6px]" />
        <Tool icon={<OpenIcon />} label="Open" className="w-[66px] gap-[2px] tracking-[-0.4px]" />
        <Tool icon={<SaveIcon />} label="Save" className="w-[59px] gap-[3px]" />
        <PrintIcon />
        <span className="ml-[7px]"><PrintIcon eye /></span>
        <span className="ml-[7px] h-6 w-px bg-[#a0a0a0]" />
        <span className="mb-[3px] ml-[4px]"><UndoIcon /></span>
        <span className="mb-[3px] ml-[7px]"><UndoIcon gray /></span>
        <Tool icon={<CutIcon />} label="Cut" gray className="ml-[9px] w-[57px] gap-[3px]" />
        <Tool icon={<CopyIcon />} label="Copy" gray className="w-[62px] gap-[3px] tracking-[-0.2px]" />
        <Tool icon={<PasteIcon />} label="Paste" gray className="w-[64px] gap-[3px] tracking-[-0.1px]" />
        <span className="h-6 w-px bg-[#a0a0a0]" />
        <Tool icon={<FindIcon />} label="Find" className="ml-[8px] gap-[3px] tracking-[-0.3px]" />
      </div>
      <div className="flex h-8 items-center border-t border-b border-t-white border-b-[#a0a0a0] pl-[9px]">
        <span className="ml-px"><CursorIcon /></span>
        <span className="ml-[10px] pb-0.5"><XyzIcon /></span>
        <span className="ml-[7px]"><XyzLinkIcon /></span>
        <span className="ml-[7px]"><NoteIcon /></span>
        <span className="ml-[9px] h-5 w-5 border border-[#f00]" />
        <span className="ml-2"><AbIcon /></span>
        <span className="ml-[7px] pb-[4px]"><MsgIcon /></span>
        <span className="ml-[7px] pb-[4px]"><MsgIcon solid /></span>
      </div>
      <div className="flex h-[583px]">
        <aside className="flex w-[374px] flex-col">
          <Stereotypes />
          <TreeView />
          <Debug />
          <Documentation />
        </aside>
        <div className="h-[582px] w-1 bg-[#fafafa]" />
        <div className="h-[582px] w-0.5 border-l border-[#a0a0a0] bg-[#696969]" />
        <Workspace />
      </div>
      <StatusBar />
      <Taskbar />
    </div>
  );
}
